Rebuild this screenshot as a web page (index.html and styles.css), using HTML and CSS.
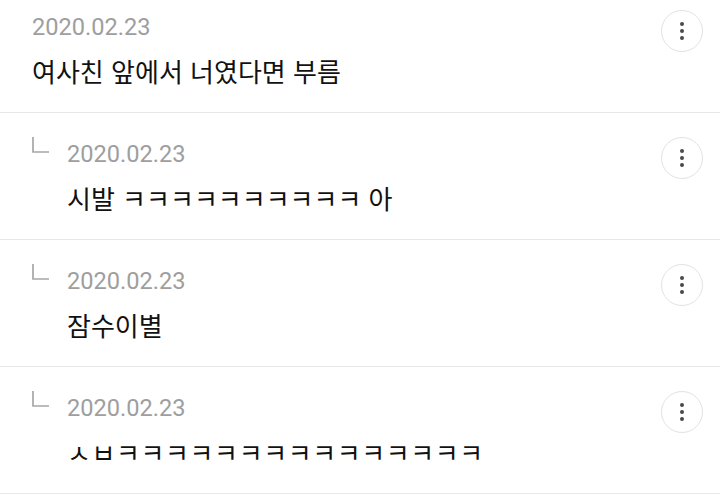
FILE: index.html
```html
<!DOCTYPE html>
<html lang="ko">
<head>
<meta charset="utf-8">
<link rel="stylesheet" href="styles.css">
</head>
<body>
<ul class="comments">
  <li class="comment">
    <div class="body">
      <div class="date">2020.02.23</div>
      <div class="text">여사친 앞에서 너였다면 부름</div>
    </div>
    <button class="more" aria-label="더보기"><span></span><span></span><span></span></button>
  </li>
  <li class="comment reply">
    <svg class="reply-icon" width="17" height="16" viewBox="0 0 17 16"><path d="M1 0 V15 H17" fill="none" stroke="#a6a6a6" stroke-width="1.7"/></svg>
    <div class="body">
      <div class="date">2020.02.23</div>
      <div class="text">시발 ㅋㅋㅋㅋㅋㅋㅋㅋㅋㅋ 아</div>
    </div>
    <button class="more" aria-label="더보기"><span></span><span></span><span></span></button>
  </li>
  <li class="comment reply">
    <svg class="reply-icon" width="17" height="16" viewBox="0 0 17 16"><path d="M1 0 V15 H17" fill="none" stroke="#a6a6a6" stroke-width="1.7"/></svg>
    <div class="body">
      <div class="date">2020.02.23</div>
      <div class="text">잠수이별</div>
    </div>
    <button class="more" aria-label="더보기"><span></span><span></span><span></span></button>
  </li>
  <li class="comment reply">
    <svg class="reply-icon" width="17" height="16" viewBox="0 0 17 16"><path d="M1 0 V15 H17" fill="none" stroke="#a6a6a6" stroke-width="1.7"/></svg>
    <div class="body">
      <div class="date">2020.02.23</div>
      <div class="text jamo">ㅅㅂㅋㅋㅋㅋㅋㅋㅋㅋㅋㅋㅋㅋㅋㅋㅋ</div>
    </div>
    <button class="more" aria-label="더보기"><span></span><span></span><span></span></button>
  </li>
</ul>
</body>
</html>
```
FILE: styles.css
```css
html, body {
  margin: 0;
  padding: 0;
  background: #fff;
}
body {
  font-family: Roboto, "Noto Sans CJK KR", sans-serif;
  overflow: hidden;
}
.comments {
  list-style: none;
  margin: -14px 0 0;
  padding: 0;
}
.comment {
  display: flex;
  align-items: flex-start;
  height: 126px;
  border-bottom: 1px solid #e8e8e8;
  padding: 0 17px 0 32px;
}
.reply-icon {
  flex: none;
  margin-top: 24px;
  margin-right: 18px;
}
.body {
  flex: 1;
  min-width: 0;
  padding-top: 26px;
}
.date {
  font-family: Roboto, sans-serif;
  font-size: 23.6px;
  line-height: 30px;
  color: #9e9e9e;
}
.text {
  margin-top: 11px;
  font-family: "Noto Sans CJK KR", sans-serif;
  font-size: 26px;
  line-height: 36px;
  color: #111;
  white-space: nowrap;
}
.text.jamo {
  letter-spacing: 0.6px;
}
.more {
  flex: none;
  margin-top: 24px;
  width: 42px;
  height: 42px;
  border: 1px solid #e3e3e3;
  border-radius: 50%;
  background: #fff;
  padding: 0;
  display: flex;
  flex-direction: column;
  align-items: center;
  justify-content: center;
  gap: 3px;
}
.more span {
  width: 4px;
  height: 4px;
  border-radius: 50%;
  background: #4a4a4a;
}
```
